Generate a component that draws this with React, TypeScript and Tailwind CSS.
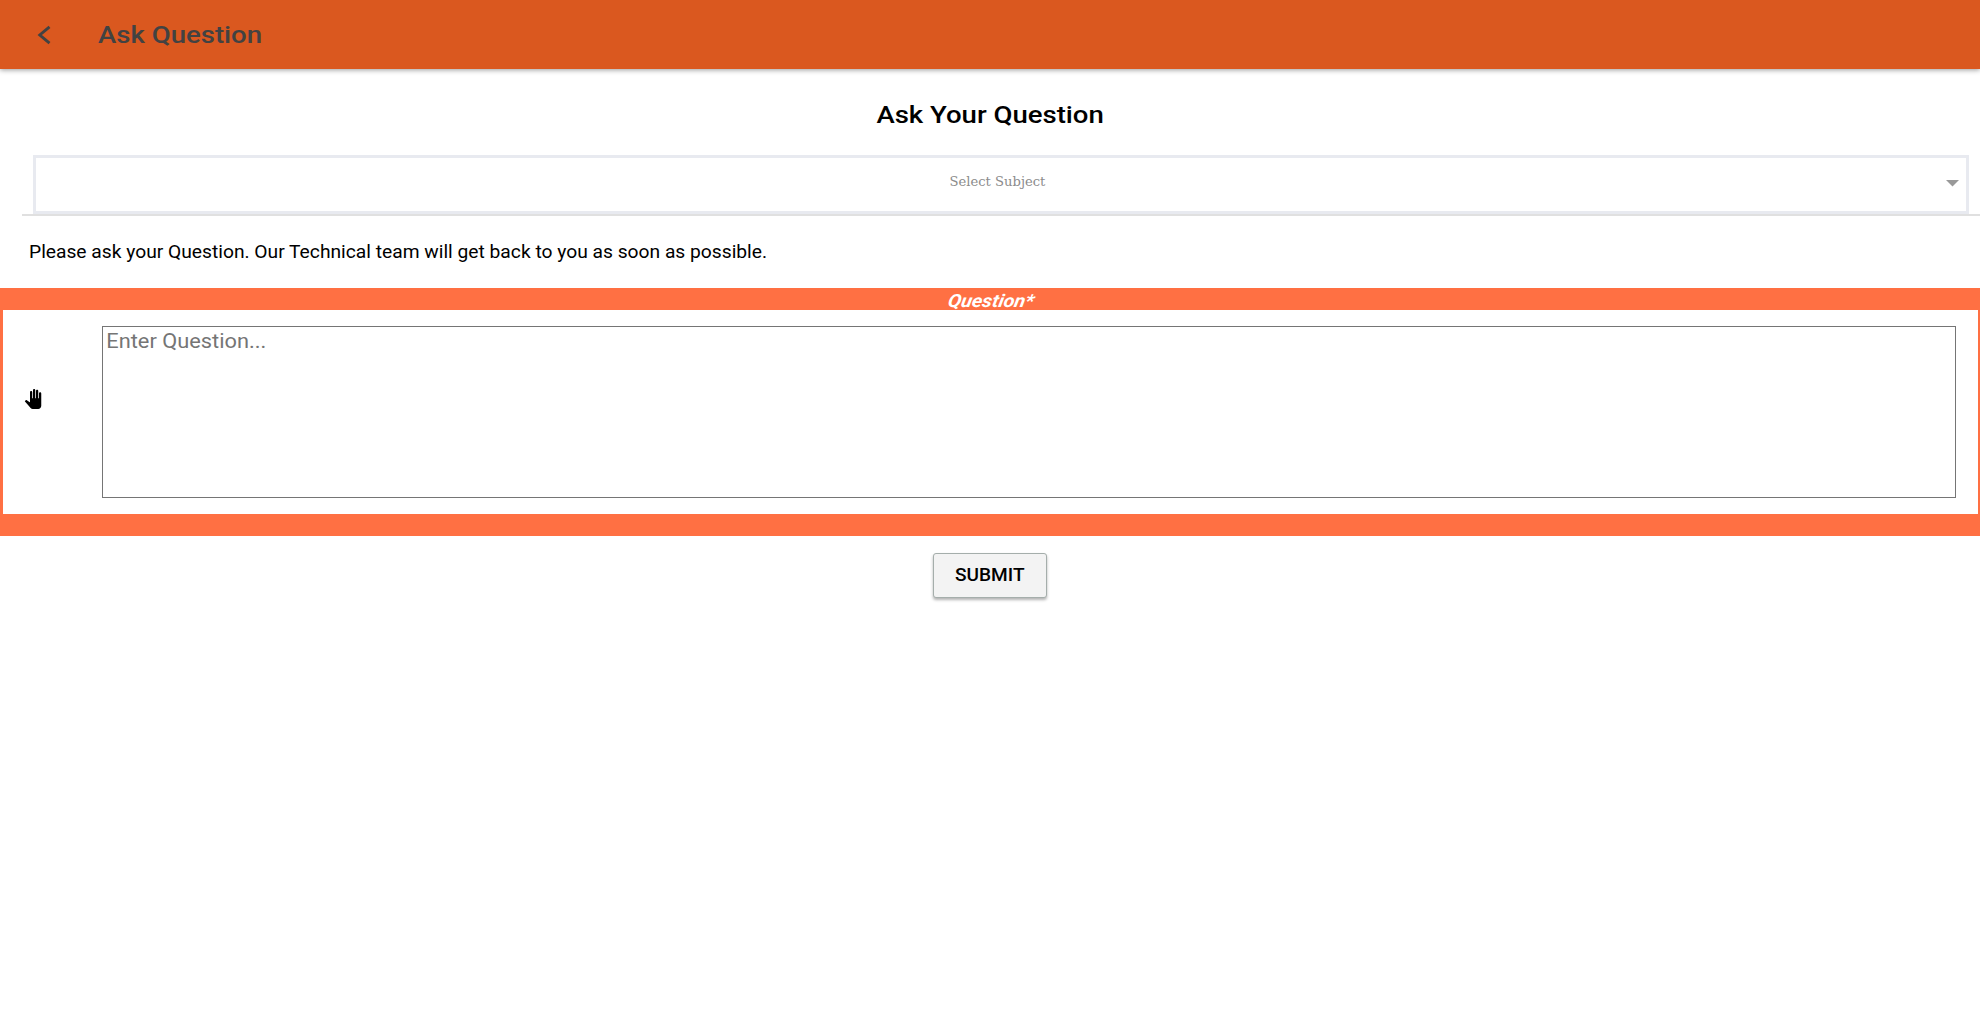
import { MdPanTool } from 'react-icons/md';

function Header() {
  return (
    <header className="flex h-[68.5px] items-center bg-[#da581f] pt-px text-[#424242] shadow-[0_1px_5px_rgba(0,0,0,0.4)]">
      <button className="ml-9 flex w-[62px] shrink-0" aria-label="Back">
        <svg width="16" height="20" viewBox="0 0 16 20" fill="none" stroke="currentColor" strokeWidth="2.9">
          <path d="M13.5 1.8 3.8 10l9.7 8.2" />
        </svg>
      </button>
      <h1 className="origin-left scale-x-[1.148] text-2xl font-medium whitespace-nowrap">Ask Question</h1>
    </header>
  );
}

function SubjectSelect() {
  return (
    <div className="ml-[22px] border-b-2 border-[#e0e0e0] pr-[11px] pl-[11px]">
      <div className="flex h-[59px] items-center justify-center border-3 border-[#e8eaf0]">
        <span className="flex-1" />
        <span className="scale-x-[1.01] pb-1.5 font-['DejaVu_Serif',serif] text-[13px] text-[#8c8c8c]">Select Subject</span>
        <span className="flex flex-1 justify-end pr-[7px] pb-0.5">
          <svg width="13" height="7" viewBox="0 0 13 7" className="fill-[#999]">
            <path d="M0 0h13L6.5 6.5z" />
          </svg>
        </span>
      </div>
    </div>
  );
}

function QuestionForm() {
  return (
    <section className="mt-[22px] flex h-[247.5px] flex-col bg-[#ff7043] pr-[2px] pb-[21.5px] pl-[3px]">
      <div className="flex h-[22px] items-center justify-center pt-1 pl-0.5 text-lg leading-none font-bold text-white italic">
        <span className="scale-x-[1.1] -skew-x-10">Question*</span>
      </div>
      <div className="flex flex-1 items-center bg-white pr-[22px] pl-[21px]">
        <MdPanTool className="mr-[60px] mb-[27px] h-5 w-[18px] shrink-0 text-black" preserveAspectRatio="none" />
        <div className="flex h-[172px] flex-1 border-[1.5px] border-[#757575]">
          <textarea
            className="h-full w-[90%] origin-left scale-x-[1.09] resize-none px-[3px] py-0.5 text-[20px] leading-6 outline-none placeholder:text-[#757575]"
            placeholder="Enter Question..."
          />
        </div>
      </div>
    </section>
  );
}

export default function App() {
  return (
    <main className="min-h-[1020px] bg-white font-[Roboto,sans-serif] text-black">
      <Header />
      <h2 className="flex h-[86.5px] items-center justify-center pt-[7px] text-2xl font-medium">
        <span className="scale-x-[1.147]">Ask Your Question</span>
      </h2>
      <SubjectSelect />
      <p className="mt-[21px] ml-[29px] w-fit origin-left scale-x-[1.068] text-lg leading-[29px] whitespace-nowrap">
        Please ask your Question. Our Technical team will get back to you as soon as possible.
      </p>
      <QuestionForm />
      <div className="mt-[17px] flex justify-center">
        <button className="flex h-[45px] w-[114px] items-center justify-center rounded-[3px] border border-[#a5aeab] bg-[#f3f3f3] pb-px text-lg font-medium shadow-[0_2px_3px_rgba(0,0,0,0.3)]">
          <span className="scale-x-[1.06]">SUBMIT</span>
        </button>
      </div>
    </main>
  );
}
